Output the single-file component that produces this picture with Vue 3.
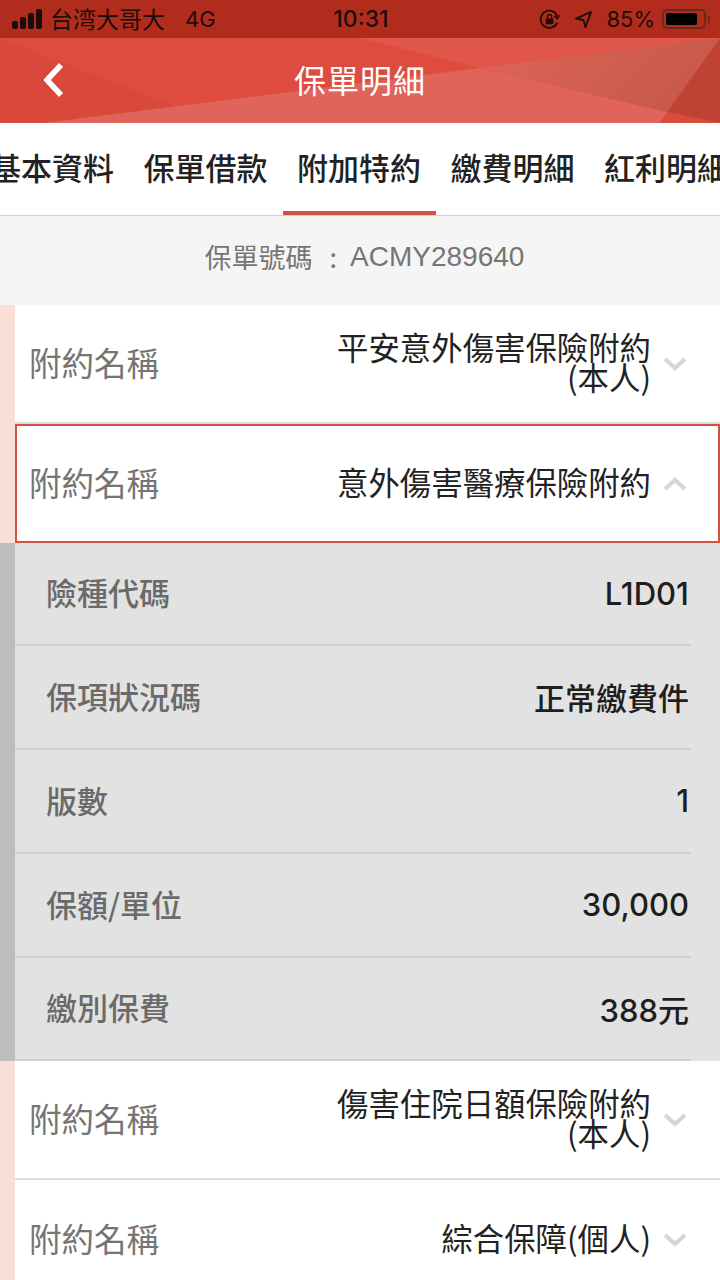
<script setup>
const tabs = [
  { label: '基本資料' },
  { label: '保單借款' },
  { label: '附加特約', active: true },
  { label: '繳費明細' },
  { label: '紅利明細' }
]

const details = [
  { label: '險種代碼', value: 'L1D01' },
  { label: '保項狀況碼', value: '正常繳費件' },
  { label: '版數', value: '1' },
  { label: '保額/單位', value: '30,000' },
  { label: '繳別保費', value: '388元' }
]
</script>

<template>
  <div class="page">
    <header class="top">
      <svg class="top__bg" viewBox="0 0 720 123" preserveAspectRatio="none">
        <defs>
          <linearGradient id="glass" x1="0" y1="0" x2="1" y2="0.3">
            <stop offset="0" stop-color="#de6557" />
            <stop offset="1" stop-color="#c8594b" />
          </linearGradient>
        </defs>
        <polygon points="0,38 217,123 0,123" fill="#d8493c" />
        <polygon points="43,123 480,68 667,112 660,123" fill="#e0645a" />
        <polygon points="360,38 720,38 480,68" fill="#e0574a" />
        <polygon points="480,68 720,38 667,112" fill="url(#glass)" />
        <polygon points="720,38 720,123 667,112" fill="#bf4333" />
        <polygon points="667,112 720,123 660,123" fill="#d94b3c" />
      </svg>
      <div class="status">
        <div class="status__left">
          <svg class="signal" viewBox="0 0 31 20">
            <rect x="0" y="12" width="6" height="8" rx="2" />
            <rect x="8" y="8" width="6" height="12" rx="2" />
            <rect x="16" y="4" width="6" height="16" rx="2" />
            <rect x="24" y="0" width="6" height="20" rx="2" />
          </svg>
          <span class="status__carrier">台湾大哥大</span>
          <span class="status__net">4G</span>
        </div>
        <div class="status__time">10:31</div>
        <div class="status__right">
          <svg class="lock" viewBox="0 0 24 24" fill="none" stroke="#1c0d08" stroke-width="1.8">
            <path d="M20 15.5A9 9 0 1 1 20 8" />
            <path d="M22.5 7.5 20 11l-3-3" />
            <rect x="8" y="11" width="8" height="6" rx="1" fill="#1c0d08" stroke="none" />
            <path d="M9.8 11V9a2.2 2.2 0 0 1 4.4 0v2" stroke-width="1.4" />
          </svg>
          <svg class="arrow" viewBox="0 0 20 20" fill="none" stroke="#1c0d08" stroke-width="2" stroke-linejoin="round">
            <path d="M18 2 2 9l8 1.5L12 18z" />
          </svg>
          <span class="status__pct">85%</span>
          <div class="battery">
            <div class="battery__fill"></div>
          </div>
          <div class="battery__tip"></div>
        </div>
      </div>
      <div class="nav">
        <svg class="nav__back" viewBox="0 0 24 36" fill="none" stroke="#fff" stroke-width="5.5">
          <path d="M20 3 6 18l14 15" />
        </svg>
        <span class="nav__title">保單明細</span>
      </div>
    </header>

    <nav class="tabs">
      <div
        v-for="tab in tabs"
        :key="tab.label"
        class="tabs__item"
        :class="{ 'tabs__item--active': tab.active }"
      >{{ tab.label }}</div>
    </nav>

    <div class="policy">
      <span>保單號碼</span>
      <span class="policy__colon">:</span>
      <span class="policy__no">ACMY289640</span>
    </div>

    <div class="rider">
      <div class="rider__row">
        <div class="rider__label">附約名稱</div>
        <div class="rider__value">平安意外傷害保險附約<br />(本人)</div>
        <svg class="chevron" viewBox="0 0 24 14"><path d="M2 2l10 9 10-9" /></svg>
      </div>
    </div>

    <div class="rider">
      <div class="rider__row rider__row--open">
        <div class="rider__label">附約名稱</div>
        <div class="rider__value">意外傷害醫療保險附約</div>
        <svg class="chevron" viewBox="0 0 24 14"><path d="M2 12l10-9 10 9" /></svg>
      </div>
    </div>

    <div class="detail">
      <div v-for="item in details" :key="item.label" class="detail__row">
        <span class="detail__label">{{ item.label }}</span>
        <span class="detail__value">{{ item.value }}</span>
      </div>
    </div>

    <div class="rider">
      <div class="rider__row">
        <div class="rider__label">附約名稱</div>
        <div class="rider__value">傷害住院日額保險附約<br />(本人)</div>
        <svg class="chevron" viewBox="0 0 24 14"><path d="M2 2l10 9 10-9" /></svg>
      </div>
    </div>

    <div class="rider">
      <div class="rider__row rider__row--last">
        <div class="rider__label">附約名稱</div>
        <div class="rider__value">綜合保障(個人)</div>
        <svg class="chevron" viewBox="0 0 24 14"><path d="M2 2l10 9 10-9" /></svg>
      </div>
    </div>
  </div>
</template>

<style>
html,
body {
  margin: 0;
  background: #fff;
}
</style>

<style scoped>
.page {
  width: 720px;
  height: 1280px;
  overflow: hidden;
  background: #fff;
  font-family: "Noto Sans CJK TC", "Noto Sans", sans-serif;
}

.top {
  position: relative;
  height: 123px;
  background: #de4c3f;
}

.top__bg {
  position: absolute;
  inset: 0;
  width: 100%;
  height: 100%;
}

.status {
  position: relative;
  height: 38px;
  background: #b22c1e;
  display: grid;
  grid-template-columns: 1fr auto 1fr;
  align-items: center;
  padding: 0 10px 0 12px;
  color: #1c0d08;
  font-size: 23px;
}

.status__left,
.status__right {
  display: flex;
  align-items: center;
}

.status__left {
  gap: 7px;
}

.status__carrier {
  margin-bottom: 3px;
}

.status__net {
  margin-left: 13px;
  font-family: Inter, sans-serif;
  font-size: 22px;
}

.status__time {
  font-family: Inter, sans-serif;
  font-weight: 500;
  font-size: 23px;
}

.status__right {
  justify-content: flex-end;
  font-family: Inter, sans-serif;
  font-size: 22px;
}

.signal {
  width: 31px;
  height: 20px;
  fill: #1c0d08;
}

.lock {
  width: 23px;
  height: 23px;
  margin-right: 13px;
}

.arrow {
  width: 19px;
  height: 19px;
  margin-right: 13px;
}

.battery {
  width: 44px;
  height: 20px;
  box-sizing: border-box;
  margin-left: 7px;
  padding: 2px;
  border: 2px solid #6b2a1c;
  border-radius: 5px;
}

.battery__fill {
  width: 85%;
  height: 100%;
  background: #000;
  border-radius: 2px;
}

.battery__tip {
  width: 2px;
  height: 7px;
  margin-left: 2px;
  background: #6b2a1c;
}

.nav {
  position: relative;
  height: 85px;
  display: flex;
  align-items: center;
  justify-content: center;
  padding-bottom: 4px;
  box-sizing: border-box;
}

.nav__back {
  position: absolute;
  left: 41px;
  top: 24px;
  width: 24px;
  height: 36px;
}

.nav__title {
  color: #fff;
  font-size: 32px;
  letter-spacing: 1px;
}

.tabs {
  height: 92px;
  display: flex;
  justify-content: center;
  gap: 29.5px;
  padding-right: 2px;
  background: #fff;
  border-bottom: 1px solid #d0d0d0;
  overflow: hidden;
}

.tabs__item {
  flex: none;
  box-sizing: border-box;
  width: 124px;
  height: 92px;
  line-height: 88px;
  text-align: center;
  font-size: 31px;
  font-weight: 500;
  color: #222;
  white-space: nowrap;
}

.tabs__item--active {
  position: relative;
}

.tabs__item--active::after {
  content: "";
  position: absolute;
  left: -14px;
  right: -15px;
  bottom: 0;
  height: 4px;
  background: #cf5245;
}

.policy {
  height: 89px;
  box-sizing: border-box;
  padding: 0 0 8px 9px;
  display: flex;
  align-items: center;
  justify-content: center;
  background: #f5f5f5;
  color: #757575;
  font-size: 27px;
}

.policy__colon {
  margin: 0 13px 0 17px;
}

.policy__no {
  font-family: "Liberation Sans", sans-serif;
  font-size: 28px;
}

.rider {
  padding-left: 15px;
  background: #fadfd8;
}

.rider__row {
  box-sizing: border-box;
  height: 119px;
  display: flex;
  align-items: center;
  padding: 0 33px 0 14px;
  background: #fff;
  border-bottom: 2px solid #dcdcdc;
}

.rider__row--open {
  border: 2px solid #cf5245;
  padding-left: 12px;
  padding-right: 31px;
}

.rider__row--last {
  border-bottom: 0;
}

.rider__label {
  margin-bottom: 4px;
  font-size: 32.5px;
  color: #757575;
}

.rider__value {
  flex: 1;
  margin-bottom: 4px;
  text-align: right;
  font-size: 31.4px;
  line-height: 30px;
  color: #222;
}

.chevron {
  flex: none;
  width: 24px;
  height: 14px;
  margin-left: 12px;
  fill: none;
  stroke: #d5d5d5;
  stroke-width: 4;
}

.detail {
  border-left: 15px solid #bdbdbd;
  background: #e2e2e2;
}

.detail__row {
  box-sizing: border-box;
  height: 104px;
  margin-right: 29px;
  padding: 0 0 4px 31px;
  display: flex;
  align-items: center;
  justify-content: space-between;
  border-bottom: 2px solid #cfcfcf;
}

.detail__row:first-child {
  height: 103px;
}

.detail__row:last-child {
  height: 103px;
}

.detail__label {
  font-size: 31px;
  font-weight: 500;
  color: #6a6a6a;
}

.detail__value {
  margin: 3px 2px 0 0;
  font-family: Inter, "Noto Sans CJK TC", sans-serif;
  font-size: 31px;
  font-weight: 500;
  color: #1e1e1e;
}
</style>
